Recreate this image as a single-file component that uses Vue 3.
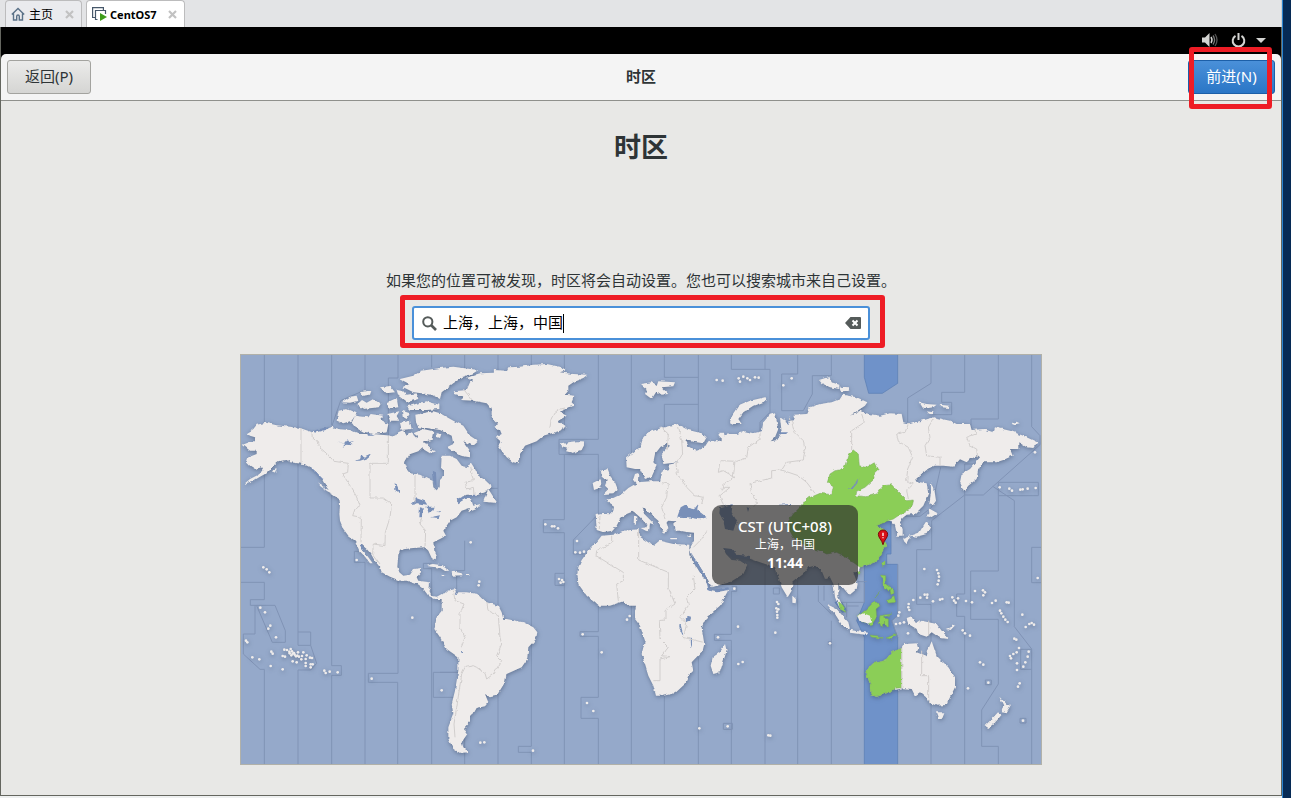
<script setup>
import { ref } from 'vue'

const query = ref('上海，上海，中国')

const land = [
  // North America
  'M78,206 L110,214 150,218 180,222 215,234 240,230 275,218 300,226 330,228 360,240 400,240 440,244 465,248 475,235 490,228 500,245 515,235 530,250 545,240 560,245 550,262 552,275 535,292 505,302 492,325 500,345 510,358 540,362 565,375 578,380 580,400 590,408 599,400 600,378 612,365 612,350 603,345 605,305 630,305 650,315 665,335 685,340 692,325 705,345 715,365 735,378 750,392 752,402 735,415 715,422 680,422 655,435 650,447 675,435 692,432 700,455 722,450 710,465 685,475 690,462 665,470 650,490 630,500 620,515 610,530 618,545 600,555 580,565 583,590 590,605 587,616 575,612 565,590 555,580 520,582 500,584 480,590 475,605 472,638 478,655 490,665 510,662 522,645 543,642 543,655 530,670 535,680 570,685 568,710 575,725 590,728 605,720 615,722 605,735 585,735 565,725 550,705 530,690 500,680 480,680 450,668 425,655 420,640 405,622 393,600 380,585 365,572 360,574 370,590 385,610 398,628 390,628 375,608 358,590 345,560 325,545 310,525 300,500 298,480 300,450 298,436 275,420 260,400 245,375 230,355 210,340 190,330 150,325 140,318 115,322 100,335 90,345 75,360 60,368 40,380 12,390 30,375 55,362 70,350 65,340 45,345 30,335 20,325 25,310 50,300 50,290 30,290 8,272 35,262 48,262 45,250 30,245 20,238 40,225 50,212Z',
  // Canadian arctic
  'M480,75 L520,65 545,50 600,42 640,38 715,48 700,58 670,68 640,88 605,115 600,135 575,122 545,118 520,115 490,100 508,90Z',
  'M470,108 L490,112 500,122 530,118 535,135 500,145 475,125Z',
  'M500,158 L540,146 560,142 598,152 598,165 560,168 510,168Z',
  'M335,206 L345,185 385,190 392,180 430,185 420,196 445,210 440,235 400,240 365,232 345,220Z',
  'M296,170 L320,165 350,178 335,200 310,208 290,200Z',
  'M305,145 L330,128 350,125 355,140 330,146Z',
  'M350,152 L366,138 380,146 400,135 422,150 416,160 370,165Z',
  'M360,115 L395,108 390,122 365,126Z',
  'M420,100 L450,96 465,115 440,118Z',
  'M442,145 L470,132 475,160 445,164Z',
  'M442,180 L478,172 470,186 478,200 450,200Z',
  'M486,170 L510,178 500,195 488,188Z',
  'M480,207 L510,200 515,225 485,228Z',
  'M526,182 L580,172 600,178 640,200 670,215 690,245 715,262 700,275 670,262 690,290 690,310 660,305 620,280 640,270 635,245 600,228 560,222 535,220 528,205Z',
  'M545,272 L556,264 570,285 585,292 570,298 550,286Z',
  'M520,238 L550,225 580,232 575,258 562,262 545,256Z',
  'M590,238 L604,240 600,252 590,248Z',
  'M235,385 L248,398 270,410 285,424 262,412 240,396Z',
  'M95,352 L110,345 106,356Z',
  'M735,430 L745,405 758,425 772,447 730,443Z',
  // Greenland and Iceland
  'M641,112 L680,108 690,85 700,82 680,72 705,62 720,58 760,56 762,48 800,50 805,40 840,38 880,32 920,30 960,38 980,48 960,55 1000,60 1042,62 1030,72 1005,82 985,95 985,110 975,122 1003,125 995,145 1005,155 985,160 960,175 980,185 955,200 980,218 960,230 910,245 890,262 855,275 840,300 833,328 820,325 800,310 785,290 775,275 785,265 768,250 785,240 780,228 760,218 775,210 755,190 755,165 740,148 700,140 660,138 670,128 645,120Z',
  'M963,262 L980,272 985,265 1010,262 1025,262 1033,272 1025,288 1000,297 978,292 982,284 966,280Z',
  // Caribbean
  'M560,636 L580,630 605,634 628,650 615,651 600,641Z',
  'M632,655 L645,653 665,658 668,664 635,665Z',
  'M602,662 h14 v4 h-14Z M678,662 h10 v4 h-10Z',
  // South America
  'M605,735 L612,722 625,710 645,705 650,722 655,715 680,715 715,720 740,745 775,755 785,775 790,795 800,795 850,805 880,820 892,835 888,855 865,880 862,915 845,940 800,960 795,985 770,1025 750,1030 735,1020 745,1045 735,1057 710,1062 700,1080 690,1085 690,1105 672,1125 682,1140 665,1165 670,1180 685,1195 660,1197 640,1185 625,1155 625,1120 640,1080 635,1050 645,1010 655,950 655,910 620,885 600,850 583,825 590,790 605,770Z',
  // Eurasia
  'M1067,480 L1085,477 1118,478 1122,455 1095,437 1118,433 1145,420 1165,402 1182,392 1190,388 1180,375 1185,360 1195,357 1194,385 1230,382 1260,382 1268,350 1288,345 1285,332 1318,325 1270,330 1265,300 1290,275 1280,270 1262,278 1245,300 1240,325 1250,335 1235,368 1215,375 1200,345 1185,345 1160,340 1158,310 1200,280 1210,250 1225,235 1265,222 1310,210 1345,228 1385,238 1400,250 1390,268 1350,262 1335,255 1345,275 1370,290 1392,282 1405,262 1428,258 1445,262 1445,245 1470,240 1490,240 1515,232 1540,238 1565,232 1570,205 1590,182 1605,178 1610,200 1615,225 1605,250 1592,262 1612,258 1625,235 1620,190 1640,203 1665,198 1660,182 1700,180 1710,160 1740,150 1775,145 1800,135 1808,122 1850,130 1882,145 1875,155 1830,185 1860,170 1875,178 1920,185 1950,178 1985,180 1990,205 2010,210 2060,195 2080,190 2130,200 2150,210 2190,210 2195,228 2230,225 2260,235 2265,220 2310,230 2350,245 2392,265 2380,282 2360,280 2335,265 2335,285 2310,285 2318,305 2290,318 2270,325 2230,325 2215,345 2210,375 2185,395 2172,412 2160,385 2165,360 2190,345 2220,310 2215,305 2190,315 2180,325 2160,316 2140,338 2110,335 2080,335 2050,355 2025,378 2040,385 2060,388 2065,420 2050,455 2025,480 2000,482 1988,492 1978,508 1988,525 1988,545 1972,545 1965,515 1955,502 1940,500 1910,515 1940,530 1925,545 1938,575 1925,600 1915,620 1885,632 1860,640 1855,655 1840,655 1853,690 1850,705 1828,724 1810,702 1795,690 1795,730 1815,770 1800,765 1785,730 1780,690 1770,670 1755,675 1745,650 1725,635 1705,640 1690,660 1658,685 1655,710 1643,730 1625,700 1612,660 1605,640 1560,625 1530,614 1480,605 1450,582 1458,600 1475,618 1500,620 1522,635 1510,660 1470,685 1415,700 1400,670 1375,630 1355,605 1348,585 1362,560 1362,536 1340,534 1320,530 1305,530 1300,510 1306,502 1285,500 1280,505 1285,525 1275,540 1262,520 1255,500 1220,470 1208,460 1213,480 1245,512 1230,508 1227,532 1215,528 1222,514 1200,490 1180,472 1160,480 1140,495 1130,515 1118,530 1090,535 1070,528Z',
  // Africa
  'M1085,545 L1120,542 1150,530 1195,526 1202,550 1240,575 1258,560 1300,570 1348,572 1348,600 1370,640 1395,680 1415,712 1430,715 1465,708 1440,755 1400,790 1385,820 1393,870 1388,890 1355,925 1360,950 1345,965 1335,990 1305,1018 1270,1025 1248,1025 1240,995 1225,965 1205,900 1215,860 1200,815 1185,795 1185,770 1188,755 1165,755 1150,742 1110,755 1075,755 1040,725 1015,690 1012,660 1015,640 1025,618 1045,590 1065,570Z',
  'M1455,870 L1460,890 1440,955 1420,960 1412,935 1418,910 1440,895Z',
  // European islands
  'M1083,350 L1102,345 1110,365 1125,385 1133,405 1120,418 1090,420 1105,405 1095,395 1100,380 1085,368Z',
  'M1058,387 L1082,375 1085,400 1062,408Z',
  'M1182,485 L1189,488 1188,512 1181,510Z M1202,522 L1224,520 1220,532Z',
  'M1290,552 h18 v4 h-16Z M1340,546 l14,-6 -4,10Z',
  'M1200,90 L1235,85 1250,96 1255,82 1305,85 1300,97 1265,100 1285,120 1265,122 1250,112 1235,135 1215,120 1220,108Z',
  'M1470,205 L1475,185 1495,155 1530,140 1575,130 1580,140 1540,155 1510,175 1495,195 1505,210 1480,210Z',
  'M1435,236 l18,0 0,8 -16,4Z',
  'M1737,78 L1768,68 1775,85 1798,92 1798,105 1770,100 1745,88Z',
  'M1800,98 L1825,100 1828,110 1805,112Z',
  'M2038,145 L2060,150 2090,152 2080,160 2050,164Z M2098,152 l30,3 -3,7 -20,-2Z M2058,172 l22,3 0,6 -16,-2Z',
  'M2315,207 l15,-4 9,5 -20,4Z',
  // Japan and Sakhalin
  'M2073,385 L2082,400 2088,440 2078,455 2068,450 2073,415Z',
  'M2058,490 L2068,478 2066,463 2093,478 2070,492Z',
  'M2060,500 L2070,520 2060,540 2030,548 2012,545 2000,570 1992,562 1990,552 2038,535 2050,515Z',
  // South and south-east Asia
  'M1657,725 L1668,735 1667,748 1657,746Z',
  'M1760,750 L1790,765 1825,805 1830,825 1810,820 1785,780Z',
  'M1830,828 L1885,836 1880,843 1830,836Z',
  'M2000,795 L2015,790 2030,810 2045,800 2090,810 2105,830 2128,855 2100,852 2075,835 2060,848 2035,840 2030,825 2005,810Z',
  'M2120,825 L2136,818 2140,808 2144,815 2132,828Z',
  // Australia and New Zealand
  'M1882,945 L1900,928 1935,920 1955,895 1985,883 1993,870 2030,868 2035,885 2030,895 2060,907 2065,885 2075,862 2090,905 2125,940 2145,970 2145,1000 2125,1040 2120,1053 2090,1055 2065,1045 2058,1030 2040,1015 2025,1025 2015,1005 1990,1003 1965,1008 1910,1028 1892,1022 1890,990 1880,960Z',
  'M2088,1075 L2113,1075 2105,1095 2095,1095Z',
  'M2278,1028 L2300,1050 2313,1052 2300,1075 2285,1072 2290,1055Z',
  'M2274,1075 L2285,1082 2265,1106 2245,1122 2235,1115 2260,1090Z'
]

const selected = [
  'M1640,510 L1660,480 1690,450 1700,435 1740,418 1775,422 1780,395 1762,385 1770,360 1785,350 1800,348 1815,335 1825,300 1840,288 1855,300 1858,335 1880,340 1905,325 1915,345 1900,360 1903,375 1875,400 1850,412 1848,425 1880,428 1910,420 1930,395 1955,392 1975,415 2000,440 2020,438 2015,460 1990,475 1960,495 1940,502 1910,515 1940,530 1925,545 1938,575 1925,600 1915,620 1885,632 1860,640 1820,610 1790,595 1760,600 1740,590 1700,580 1660,550Z',
  'M1882,945 L1900,928 1935,920 1955,895 1985,883 1985,1001 1965,1003 1965,1008 1910,1028 1892,1022 1890,990 1880,960Z',
  'M1852,785 L1865,778 1880,765 1905,740 1920,755 1908,765 1910,790 1895,812 1865,806Z',
  'M1920,785 L1955,780 1930,792 1945,795 1945,822 1930,805 1925,822 1918,805Z',
  'M1925,663 L1937,665 1937,690 1955,705 1950,715 1930,695Z',
  'M1940,738 L1962,725 1967,745 1945,747Z M1950,710 l10,-6 2,14 -8,4Z M1905,732 L1922,710 1908,728Z',
  'M1795,742 L1810,755 1817,775 1800,765Z M1925,628 L1935,618 1935,632 1928,638Z M1852,652 l10,-3 2,8 -8,4Z',
  'M1890,843 l24,3 14,2 0,5 -34,-4Z M1938,852 l32,-12 -18,15Z'
]

const water = [
  'M1312,488 L1322,460 1340,450 1345,462 1362,466 1375,450 1372,468 1400,490 1380,496 1345,490Z',
  'M1440,460 L1478,450 1475,475 1490,500 1480,530 1455,525 1450,500 1438,478Z',
  'M1520,460 L1528,462 1524,474Z M1615,452 l38,-2 0,4 -36,0Z',
  'M1450,582 L1475,585 1490,602 1530,606 1530,616 1480,612 1460,600Z',
  'M1348,588 L1375,630 1397,668 1405,708 1415,712 1405,690 1375,645 1362,618Z',
  'M1335,790 l10,-4 8,2 -2,12 -12,4 -5,-6Z M1318,810 l4,2 8,30 -3,0 -9,-20Z M1352,850 l4,3 0,28 -3,-8Z',
  'M1410,708 L1465,700 1467,706 1430,713Z',
  'M1820,408 L1840,396 1855,372 1852,388 1838,404Z',
  'M290,264 L312,268 322,256 328,264 342,261 330,268 338,274 322,272 308,278 316,269Z',
  'M344,320 L360,316 364,304 370,312 396,300 385,312 360,320Z',
  'M464,386 L472,396 480,416 476,417 466,404Z',
  'M512,450 L530,433 555,442 562,452 530,448Z M540,460 L548,462 546,490 538,490Z M555,458 L585,458 580,470 566,478 562,465Z M570,490 L600,484 596,492Z M588,474 l14,-3 0,4Z',
  'M650,436 L665,428 716,422 700,428 675,434 655,448Z',
  'M215,232 l20,-6 30,-6 -8,8 -30,8Z M360,572 l6,2 10,20 -6,-4Z',
  'M210,336 l40,40 -4,4 -34,-38Z',
  'M660,890 l6,2 0,5 -5,-1Z M645,716 l6,-2 0,8 -5,1Z',
  'M1615,235 L1640,235 1640,240 1618,240Z M1640,200 l10,6 -6,8Z',
  'M240,230 l10,-8 3,3Z M380,235 l24,10 -20,0Z M578,350 l10,5 2,45 -6,-4Z'
]

const oceanZones = [
  'M73,0 V580 H0 M0,685 H73 V737 H31 V754 H105 L136,830 V865 H97 L50,755 M45,754 V840 H10 V900 L60,946 H73 V1233',
  'M174,0 V834 H212 V874 H174 V834 M212,874 L230,928 212,948 H174 V1233',
  'M275,0 V935 H304 V964 H275 V1233 M275,218 L302,140 375,108 V0 M343,592 V625 H375 V1233 M343,592 H362',
  'M474,0 V72 H445 V245 M474,680 V958 H385 V985 H473 V1233',
  'M575,0 V40 M575,628 H550 V644 H575 V1233 M580,955 H655 M580,955 V1030 H655',
  'M674,0 V60 M674,560 V650 H650 V705 M674,1060 V1233 M774,0 V1233 M774,403 H735 M600,955 H650',
  'M874,0 V1177 H835 V1195 H874 V1233',
  'M973,0 V230 M1075,0 V256 H957 V301 H1075 V480 L1000,558 V600 H1030 M973,301 V497 H910 V536 H973 V1233 M973,658 H945 V694 H973',
  'M1075,755 V833 H1020 V847 H1075 V1030 H1023 V1093 H1075 V1233 M1174,0 V300 M1174,740 V1233',
  'M1273,0 V70 H1375 M1273,230 V151 H1375 M1375,0 V240 M1474,0 V46 H1590 V175 L1560,205 V235 M1575,0 V46',
  'M1673,0 V60 H1625 V170 H1690 L1717,120 V65 H1774 V0',
  'M1273,1020 V1233 M1375,910 V1233 M1475,697 H1490 V712 H1474 V841 H1423 V859 H1474 V1233 M1450,1108 h27 v18 h-27Z',
  'M1575,640 V1233 M1600,702 h18 v18 h-18Z M1673,680 V1233 M1774,800 V1233 M1735,695 V742 L1774,780 M1752,695 V740 M1765,863 h9 v9 h-9Z',
  'M2073,0 V88 L2003,132 V205 M2174,0 V115 H2105 V145 H2135 V182 H2075 M2275,0 V195 H2193 V230 M2375,0 V218 L2400,245 V272 L2230,423 H2174 V330 H2230 M2174,423 L2075,500 V587 H2030 V751 H2073 V1233',
  'M2275,385 H2395 V425 H2275 Z M2258,397 L2323,440 V818 L2375,885 V1233 M2342,886 V946 H2375 M2342,886 H2375 M2174,423 V720 H2150 V787 H2174 V1233',
  'M2275,425 V651 H2192 V796 H2275 V990 L2225,1068 V1177 H2275 V1233 M2406,580 H2375 V686 H2406 M1990,487 H2040 L2075,460 2102,340',
  'M1873,687 V745 H1800 M1820,745 V790 M1856,756 H1822 M1880,683 H1853 M1973,631 V785 L1955,800 1973,850 M2236,978 h18 v14 h-18Z M2340,1093 h18 v14 h-18Z'
]

const landZones = [
  'M183,222 V327 M215,234 L218,255 235,265 240,282 262,300 282,322 325,328 323,355 308,360 330,395 348,425 360,455 345,465 338,485 364,490 363,565',
  'M445,245 V328 H390 V432 H430 L455,450 450,490 436,535 435,575 400,570 398,600 420,630',
  'M525,362 V445 M545,490 L540,510 557,530 555,580 M692,340 L700,380 675,385 680,405 700,400 702,420 M670,105 L698,140 M930,222 Q930,165 975,162',
  'M640,710 L645,740 672,750 660,780 660,820 675,850 664,880 M740,745 L745,770 775,785 780,850 785,870 770,905 785,920 760,960 740,975 735,958 710,940 700,935 675,940 665,960 650,1060 642,1110 645,1150',
  'M1265,222 L1285,240 1282,290 M1315,215 L1325,260 1328,300 1308,330 1312,360 1340,400 1365,425 1390,430 1385,450 M1260,385 L1285,390 1280,430 1265,460 1275,495',
  'M1560,235 L1560,255 1525,280 1520,312 1490,322 1440,320 1435,355 1450,350 1485,370 1450,390 1445,410 1455,400 1470,400 1440,425 1450,455 M1485,320 L1480,370',
  'M1650,190 L1665,235 1690,260 1695,290 1690,318 1640,325 1625,348 1595,350 1595,372 1530,388 1535,420 1550,445 1540,460 M1625,348 L1675,365 1700,385 1725,418',
  'M1865,180 L1873,205 1835,230 1835,288 M2005,210 L1995,235 1970,240 1975,262 2005,280 2018,310 2003,345 2000,380 2020,390 2000,410 2005,435 M2080,195 L2065,220 2070,250 2055,275 2060,305 2100,310 2100,335 M2205,228 L2208,240 2180,250 2190,275 2210,285 2213,310',
  'M1080,485 L1078,525 M1115,545 L1115,565 1070,590 1068,605 1150,655 1150,680 1130,690 1135,740 M1196,530 V618 L1230,632 1285,655 1285,700 1305,750 1275,770 1275,798 1258,800 1260,855 1285,880 1265,905 1290,908 1260,915 V980 H1240 M1360,665 L1365,705 1340,730 1345,755 1320,790 1340,810 1330,850 1390,865 M1400,530 L1380,560 1360,580',
  'M1985,883 V1003 M2045,890 V965 H2066 V1050 M2066,800 V845'
]

const dots = [
  [88,655],[80,646],[61,761],[75,775],[91,815],[85,824],[108,850],[18,860],[22,865],[37,910],[58,916],[94,893],[98,899],[128,906],[135,908],[92,936],[128,946],
  [133,887],[141,888],[148,893],[152,885],[156,892],[158,899],[164,902],[154,904],[168,907],[174,895],[172,905],[184,916],[190,895],[186,906],[197,915],[200,904],[158,922],[170,925],[197,927],[210,911],[216,912],[197,936],[212,931],[218,931],[212,940],[149,898],[162,897],[177,908],
  [253,950],[257,957],[269,953],[293,955],[395,974],[517,791],[692,565],[916,511],[936,517],[943,517],[954,523],[1011,561],[1006,595],[1020,596],[1032,593],
  [957,675],[966,678],[970,684],[962,686],[1028,841],[1085,895],[1041,1047],[1060,1071],[1169,786],[1161,797],[1483,704],[1494,818],[1434,850],[1495,930],[1508,924],[1463,1117],[1378,1123],[1585,1144],[1591,1145],
  [1611,744],[1615,750],[1609,763],[1615,766],[1611,773],[1612,783],[1612,791],[1606,836],[1770,868],[2053,645],[2091,648],[2095,658],[2097,668],[2096,680],[2093,691],
  [2020,738],[2041,731],[2054,722],[2062,722],[2061,731],[2079,742],[2100,737],[2107,735],[2006,750],[2005,760],[2008,768],[1978,775],[1975,785],[2137,730],[2142,740],[2147,746],[2154,733],[2178,741],[2196,745],[2205,711],[2229,709],[2235,715],[2230,724],[2256,747],[2267,740],[2300,745],[2306,746],
  [2280,770],[2284,778],[2290,788],[2296,797],[2303,804],[2347,782],[2357,819],[2368,810],[2375,807],[2382,812],[2323,854],[2329,857],[2337,882],[2330,895],[2310,906],[2313,913],[2320,900],[2366,893],[2363,908],[2356,925],[2350,938],[2331,928],[2331,948],[2339,988],[2334,998],[2184,1003],[2245,986],[2349,1100],[2393,672],
  [2279,400],[2308,404],[2316,410],[2341,407],[2348,406],[2363,404],[2387,402],[2220,925],[2230,932],[2168,829],[2175,838],[2190,845],[1968,810],[1980,808],[1992,805],[2004,838],[2385,295],
  [1430,78],[1448,80],[1496,73],[1510,68],[1522,73],[1530,78],[1545,70],[1556,71],[1500,83],[1630,94],[1655,73],[721,1166],[733,1165],[879,1190],[605,1009],[350,618],[718,683],[716,694],[70,640]
]
</script>

<template>
  <div class="desktop">
    <div class="window">
      <nav class="tabs">
        <div class="tab">
          <svg width="14" height="14" viewBox="0 0 14 14" fill="none" stroke="#5b7288" stroke-width="1.4"><path d="M.8 7.6 7 1.4l6.200 6.200M2.500 6.500V13h3.200V9.300a1.300 1.300 0 0 1 2.600 0V13h3.200V6.500" /></svg>
          <a href="#">主页</a>
          <button class="close" aria-label="关闭 主页"><svg width="9" height="9" viewBox="0 0 9 9"><path d="m1 1 7 7M8 1 1 8" stroke="#c2c2c2" stroke-width="2.200" /></svg></button>
        </div>
        <div class="tab active">
          <svg width="15" height="14" viewBox="0 0 15 14" fill="none"><path d="M3 10.500H.6V.6h10.800V3M5.500 12.500H3.500V3.500h10V7" stroke="#46576a" stroke-width="1.200" /><path d="m8 6 7 4-7 4Z" fill="#3f9c1c" /></svg>
          <a href="#">CentOS7</a>
          <button class="close" aria-label="关闭 CentOS7"><svg width="9" height="9" viewBox="0 0 9 9"><path d="m1 1 7 7M8 1 1 8" stroke="#c2c2c2" stroke-width="2.200" /></svg></button>
        </div>
      </nav>

      <div class="guest">
        <div class="topbar">
          <svg width="16" height="14" viewBox="0 0 16 14"><path d="M0 4.500h3L7.500 0v14L3 9.500H0Z" fill="#d4d4d2" /><path d="M9 4q2 3 0 6" fill="none" stroke="#d4d4d2" stroke-width="1.500" /><path d="M11 2.500q3.200 4.500 0 9" fill="none" stroke="#777" stroke-width="1.300" /><path d="M13 1q4 6 0 12" fill="none" stroke="#555" stroke-width="1.300" /></svg>
          <svg width="15" height="15" viewBox="0 0 15 15" fill="none" stroke="#d4d4d2" stroke-width="2"><path d="M4.500 2.800a5.800 5.800 0 1 0 6 0M7.500 0v7" /></svg>
          <svg width="10" height="5" viewBox="0 0 10 5"><path d="M0 0h10L5 5Z" fill="#d4d4d2" /></svg>
        </div>

        <header class="header">
          <button class="btn">返回(P)</button>
          <strong>时区</strong>
          <div class="next">
            <button class="btn primary">前进(N)</button>
            <span class="mark"></span>
          </div>
        </header>

        <main class="page">
          <h1>时区</h1>
          <label for="city">如果您的位置可被发现，时区将会自动设置。您也可以搜索城市来自己设置。</label>
          <div class="search">
            <svg width="15" height="15" viewBox="0 0 15 15" fill="none" stroke="#555b5a"><circle cx="5.800" cy="5.800" r="4.600" stroke-width="2" /><path d="m9 9 5 5" stroke-width="2.600" /></svg>
            <input id="city" v-model="query" type="text" />
            <span class="caret"></span>
            <button class="clear" aria-label="清除" @click="query = ''">
              <svg width="16" height="12" viewBox="0 0 16 12"><path d="M5.500 0H15q1 0 1 1v10q0 1-1 1H5.500L0 6Z" fill="#555b5a" /><path d="m7.500 3.500 5 5m0-5-5 5" stroke="#fff" stroke-width="2" /></svg>
            </button>
            <span class="mark"></span>
          </div>

          <div class="map">
            <svg viewBox="0 0 2406 1233" role="img" aria-label="时区地图">
              <defs>
                <filter id="coast" filterUnits="userSpaceOnUse" x="0" y="0" width="2406" height="1233" color-interpolation-filters="sRGB">
                  <feTurbulence type="fractalNoise" baseFrequency="0.07" numOctaves="2" seed="4" result="noise" />
                  <feDisplacementMap in="SourceGraphic" in2="noise" scale="10" xChannelSelector="R" yChannelSelector="G" />
                </filter>
                <filter id="shade" filterUnits="userSpaceOnUse" x="0" y="0" width="2406" height="1233" color-interpolation-filters="sRGB">
                  <feDropShadow dx="1" dy="4" stdDeviation="6" flood-color="#34435f" flood-opacity="0.5" />
                </filter>
              </defs>
              <rect width="2406" height="1233" fill="#95a9ca" />
              <path class="zone" d="M1873,0 V70 L1886,118 H1927 L1973,88 V0Z M1900,500 H1953 V600 H1940 V631 H1973 V785 L1955,800 1965,830 1973,850 V1233 H1873 V850 L1850,800 1873,745 V640Z" />
              <path class="zone" d="M1785,745 h20 l16,26 -14,4Z" />
              <path v-for="d in oceanZones" :key="d" :d="d" class="ocean-line" />
              <g filter="url(#shade)">
                <g filter="url(#coast)">
                  <path :d="land.join(' ')" fill="#efeceb" />
                  <path :d="selected.join(' ')" fill="#8bce57" stroke="#78a95a" stroke-width="1.500" />
                  <path d="M1852,785 L1870,778 1890,785 1893,800 1885,812 1860,805Z" fill="#efeceb" />
                </g>
                <circle v-for="(p, i) in dots" :key="i" :cx="p[0]" :cy="p[1]" r="4" fill="#efeceb" />
              </g>
              <g filter="url(#coast)">
                <path v-for="d in water" :key="d" :d="d" fill="#788fb8" />
                <path v-for="d in landZones" :key="d" :d="d" class="land-line" />
              </g>
              <g>
                <path d="M1929,572c-3-14-14-20-14-31a14 13 0 0 1 28 0c0 11-11 17-14 31Z" fill="#d90f16" stroke="#7c0a0d" stroke-width="3" />
                <path d="M1929 536v10m0 4v3" stroke="#fff" stroke-width="4" />
              </g>
              <rect x="1.500" y="1.500" width="2403" height="1230" fill="none" stroke="#b1b1a9" stroke-width="3" />
            </svg>
            <div class="tip">
              <span class="zone-name">CST (UTC+08)</span>
              <span class="place">上海，中国</span>
              <time>11:44</time>
            </div>
          </div>
        </main>
      </div>
    </div>
  </div>
</template>

<style>
html, body { margin: 0; background: #031c3b; }
</style>

<style scoped>
* { box-sizing: border-box; }
.desktop {
  min-height: 100vh;
  display: flex;
  padding-right: 8px;
  background: linear-gradient(90deg, #011b3b, #062a55);
  font-family: "Noto Sans", "Noto Sans CJK SC", sans-serif;
  font-size: 15px;
  color: #2e3436;
}
.window { flex: 1; display: flex; flex-direction: column; padding-bottom: 2px; border-right: 1px solid #2b84d0; background: #eef0f0; }
.tabs { height: 27px; display: flex; gap: 4px; padding-left: 5px; background: #e3e4e6; border-right: 1px solid #cfd0d1; }
.tab {
  display: flex;
  align-items: center;
  height: 27px;
  padding: 0 7px 0 5px;
  gap: 4px;
  border: 1px solid #bcbcbd;
  border-width: 1px 1px 0;
  border-radius: 4px 4px 0 0;
  background: #eaebee;
  font-size: 12px;
}
.tab.active { background: #fff; gap: 3px; }
.tab a { color: #000; text-decoration: none; }
.tab.active a { font-size: 11px; font-weight: bold; }
.close { display: flex; margin-left: 8px; padding: 0; border: 0; background: none; }
.guest { flex: 1; display: flex; flex-direction: column; background: #000; border: 1px solid #64665f; border-top: 0; }
.topbar { height: 27px; display: flex; align-items: center; justify-content: flex-end; gap: 13px; padding: 0 15px 1px 0; }
.topbar svg:last-child { margin-left: -3px; }
.header {
  height: 47px;
  display: grid;
  grid-template-columns: 1fr auto 1fr;
  align-items: center;
  padding: 0 6px;
  border-radius: 5px 5px 0 0;
  border-bottom: 1px solid #8f908c;
  background: #f4f4f4;
}
.header strong { padding-bottom: 4px; }
.btn {
  justify-self: start;
  min-width: 84px;
  height: 34px;
  padding: 0 16px 4px;
  border: 1px solid #a3a39f;
  border-radius: 3px;
  background: linear-gradient(#ebebea, #d5d5d3);
  font: inherit;
  color: #2e3436;
}
.btn.primary { min-width: 87px; border-color: #1c5fa8; background: linear-gradient(#4a90d9, #2a76c6); color: #fff; }
.next { position: relative; justify-self: end; }
.mark { position: absolute; border: 5px solid #ee1c25; border-radius: 3px; pointer-events: none; }
.next .mark { inset: -13px 3px -15px 1px; z-index: 2; }
.page { flex: 1; display: flex; flex-direction: column; align-items: center; background: #e8e8e6; padding-bottom: 30px; }
h1 { margin: 26px 0 0; font-size: 27px; line-height: 40px; font-weight: bold; }
label { margin-top: 102px; line-height: 22px; }
.search {
  position: relative;
  display: flex;
  align-items: center;
  width: 458px;
  max-width: 90%;
  height: 34px;
  margin: 15px 0 14px;
  padding: 0 7px 0 8px;
  border: 2px solid #4a90d9;
  border-radius: 3px;
  background: #fff;
}
.search input { flex: 0 0 auto; width: 120px; height: 26px; margin-left: 6px; padding: 0 0 4px; border: 0; outline: 0; background: none; font: inherit; color: #000; }
.caret { width: 1px; height: 19px; background: #000; }
.clear { display: flex; margin-left: auto; padding: 0; border: 0; background: none; }
.search .mark { inset: -13px -17px -10px -14px; }
.map { position: relative; width: 802px; max-width: 100%; }
.map > svg { display: block; width: 100%; height: auto; }
.zone { fill: #6f92c9; stroke: #587bb2; stroke-width: 2; }
.ocean-line { fill: none; stroke: #8093b5; stroke-width: 3; }
.land-line { fill: none; stroke: #d1cecd; stroke-width: 3; }
.tip {
  position: absolute;
  left: 472px;
  top: 151px;
  width: 146px;
  height: 80px;
  display: flex;
  flex-direction: column;
  align-items: center;
  padding-top: 11px;
  border-radius: 9px;
  background: rgba(42, 42, 42, .67);
  color: #fff;
}
.zone-name { font-size: 15px; line-height: 20px; font-weight: 500; }
.place { font-size: 12px; line-height: 18px; }
.tip time { font-size: 14px; line-height: 18px; font-weight: bold; }
</style>
